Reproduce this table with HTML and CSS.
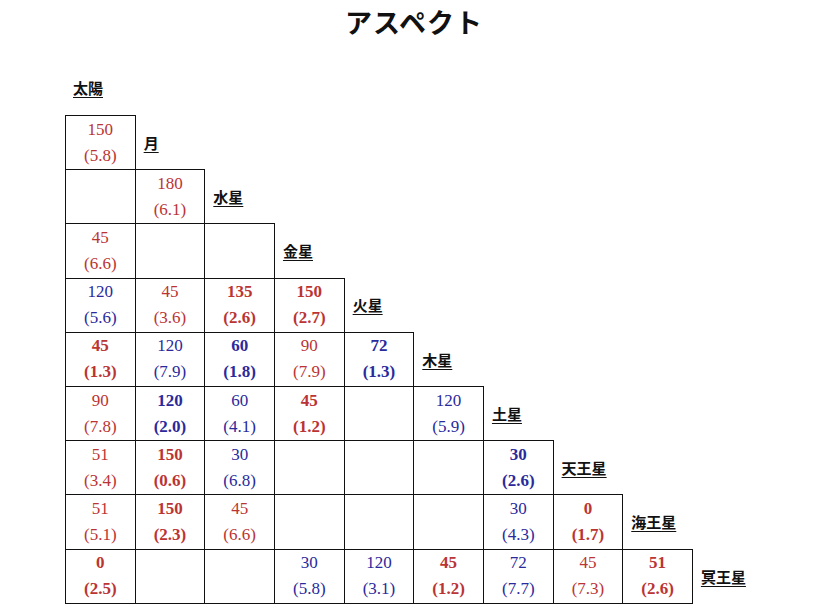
FILE: index.html
```html
<!DOCTYPE html>
<html lang="ja">
<head>
<meta charset="utf-8">
<title>アスペクト</title>
<link rel="stylesheet" href="styles.css">
</head>
<body>
<h1 class="title">アスペクト</h1>
<div class="chart">
  <div class="sun-label">太陽</div>
  <table class="aspects">
    <colgroup>
      <col class="c"><col class="c"><col class="c"><col class="c"><col class="c"><col class="c"><col class="c"><col class="c"><col class="c"><col class="lc">
    </colgroup>
    <tr>
      <td class="cell red"><div>150</div><div>(5.8)</div></td>
      <td class="label">月</td>
    </tr>
    <tr>
      <td class="cell"></td>
      <td class="cell red"><div>180</div><div>(6.1)</div></td>
      <td class="label">水星</td>
    </tr>
    <tr>
      <td class="cell red"><div>45</div><div>(6.6)</div></td>
      <td class="cell"></td>
      <td class="cell"></td>
      <td class="label">金星</td>
    </tr>
    <tr>
      <td class="cell blue"><div>120</div><div>(5.6)</div></td>
      <td class="cell red"><div>45</div><div>(3.6)</div></td>
      <td class="cell red bold"><div>135</div><div>(2.6)</div></td>
      <td class="cell red bold"><div>150</div><div>(2.7)</div></td>
      <td class="label">火星</td>
    </tr>
    <tr>
      <td class="cell red bold"><div>45</div><div>(1.3)</div></td>
      <td class="cell blue"><div>120</div><div>(7.9)</div></td>
      <td class="cell blue bold"><div>60</div><div>(1.8)</div></td>
      <td class="cell red"><div>90</div><div>(7.9)</div></td>
      <td class="cell blue bold"><div>72</div><div>(1.3)</div></td>
      <td class="label">木星</td>
    </tr>
    <tr>
      <td class="cell red"><div>90</div><div>(7.8)</div></td>
      <td class="cell blue bold"><div>120</div><div>(2.0)</div></td>
      <td class="cell blue"><div>60</div><div>(4.1)</div></td>
      <td class="cell red bold"><div>45</div><div>(1.2)</div></td>
      <td class="cell"></td>
      <td class="cell blue"><div>120</div><div>(5.9)</div></td>
      <td class="label">土星</td>
    </tr>
    <tr>
      <td class="cell red"><div>51</div><div>(3.4)</div></td>
      <td class="cell red bold"><div>150</div><div>(0.6)</div></td>
      <td class="cell blue"><div>30</div><div>(6.8)</div></td>
      <td class="cell"></td>
      <td class="cell"></td>
      <td class="cell"></td>
      <td class="cell blue bold"><div>30</div><div>(2.6)</div></td>
      <td class="label">天王星</td>
    </tr>
    <tr>
      <td class="cell red"><div>51</div><div>(5.1)</div></td>
      <td class="cell red bold"><div>150</div><div>(2.3)</div></td>
      <td class="cell red"><div>45</div><div>(6.6)</div></td>
      <td class="cell"></td>
      <td class="cell"></td>
      <td class="cell"></td>
      <td class="cell blue"><div>30</div><div>(4.3)</div></td>
      <td class="cell red bold"><div>0</div><div>(1.7)</div></td>
      <td class="label">海王星</td>
    </tr>
    <tr>
      <td class="cell red bold"><div>0</div><div>(2.5)</div></td>
      <td class="cell"></td>
      <td class="cell"></td>
      <td class="cell blue"><div>30</div><div>(5.8)</div></td>
      <td class="cell blue"><div>120</div><div>(3.1)</div></td>
      <td class="cell red bold"><div>45</div><div>(1.2)</div></td>
      <td class="cell blue"><div>72</div><div>(7.7)</div></td>
      <td class="cell red"><div>45</div><div>(7.3)</div></td>
      <td class="cell red bold"><div>51</div><div>(2.6)</div></td>
      <td class="label">冥王星</td>
    </tr>
  </table>
</div>
</body>
</html>
```
FILE: styles.css
```css
html, body {
  margin: 0;
  padding: 0;
  background: #ffffff;
  color: #111111;
  font-family: "Liberation Serif", "Noto Sans CJK JP", serif;
}

.title {
  margin: 0;
  padding-top: 4px;
  height: 36px;
  line-height: 36px;
  text-align: center;
  font-family: "Noto Sans CJK JP", sans-serif;
  font-size: 27px;
  font-weight: 700;
  letter-spacing: 1px;
}

.chart {
  padding-left: 65px;
  padding-top: 36px;
}

.sun-label,
.label {
  font-family: "Noto Sans CJK JP", sans-serif;
  font-size: 15px;
  font-weight: 700;
  text-decoration: underline;
  text-decoration-thickness: 1px;
  text-underline-offset: 3px;
  white-space: nowrap;
  color: #111111;
}

.sun-label {
  height: 24px;
  line-height: 24px;
  padding-left: 8px;
  margin-bottom: 15px;
}

.aspects {
  border-collapse: collapse;
  table-layout: fixed;
  width: 707px;
}

.aspects col.c {
  width: 69.67px;
}

.aspects col.lc {
  width: 80px;
}

.aspects tr {
  height: 54.2px;
}

.cell {
  border: 1px solid #111111;
  padding: 0;
  text-align: center;
  vertical-align: middle;
  font-size: 17px;
  line-height: 26px;
}

.label {
  padding: 0 0 0 8px;
  text-align: left;
  vertical-align: middle;
}

.red {
  color: #bb3434;
}

.blue {
  color: #2a2a9c;
}

.bold {
  font-weight: 700;
}
```
